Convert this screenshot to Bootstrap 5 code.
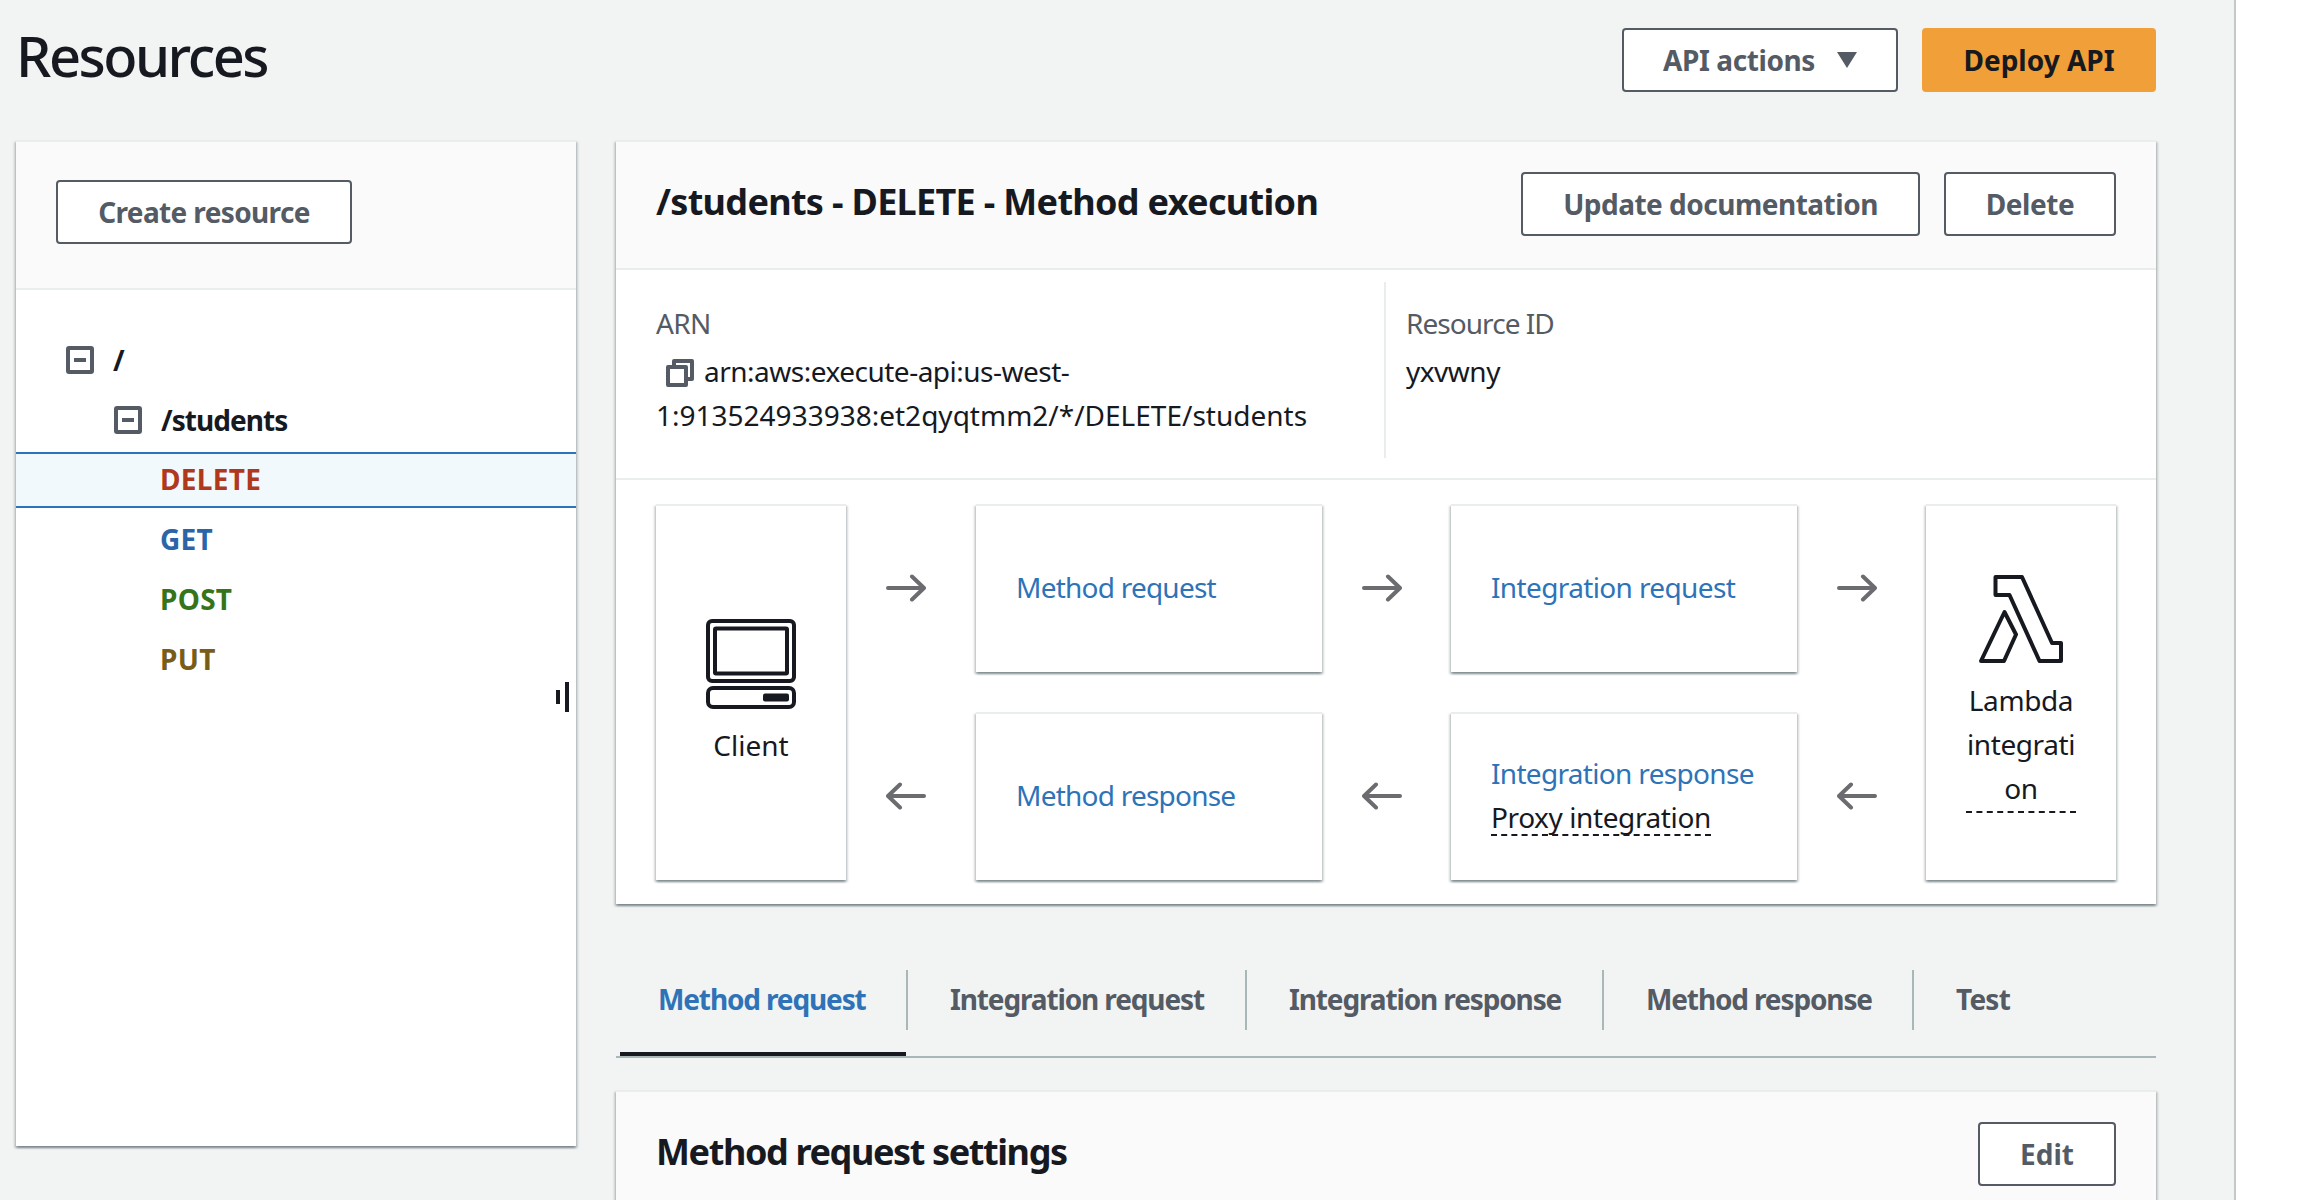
<!DOCTYPE html>
<html lang="en">
<head>
<meta charset="utf-8">
<title>Resources</title>
<link href="https://cdn.jsdelivr.net/npm/bootstrap@5.3.0/dist/css/bootstrap.min.css" rel="stylesheet">
<style>
:root{--ink:#16191f;--slate:#545b64;--blue:#2e73b8;--line:#eaeded}
html,body{height:1200px;overflow:hidden}
body{font-family:"Noto Sans","Open Sans",sans-serif;font-size:28px;font-weight:400;line-height:44px;color:var(--ink);background:#fff}
svg{display:block;flex:none}
.page{width:2236px;height:1200px;overflow:hidden;background:#f2f3f3;border-right:2px solid #c3c8c9;padding:28px 78px 0 16px}
.page-head{height:64px;margin-bottom:48px}
.page-title{font-size:56px;line-height:60px;font-weight:500;letter-spacing:-2.5px;margin:-3px 0 0}
.actions{gap:24px}
.console-btn{height:64px;border:2px solid var(--slate);border-radius:4px;background:#fff;color:var(--slate);font-size:28px;font-weight:700;line-height:58px;padding:0;white-space:nowrap}
.console-btn.deploy{background:#f19f38;border-color:#f19f38;color:var(--ink)}
.btn-api{width:276px}.deploy{width:234px}.btn-update{width:399px}.btn-delete{width:172px}.btn-create{width:296px}.btn-edit{width:138px}
.caret{margin:0 0 0 22px}
.panel{background:#fff;border:0;border-top:2px solid var(--line);border-radius:0;box-shadow:0 2px 2px rgba(0,28,36,.3),2px 2px 2px rgba(0,28,36,.15),-2px 2px 2px rgba(0,28,36,.15)}
.panel-head{background:#fafafa;border-bottom:2px solid var(--line)}
.panel-title{font-size:36px;font-weight:700;line-height:60px;margin:0}
.split{gap:40px}
.tree-panel{width:560px;height:1006px;flex:none;position:relative}
.tree-head{height:148px;padding:38px 40px}
.tree{padding-top:40px;font-weight:700}
.tree-row{height:60px;padding-bottom:1px}
.node-root{padding-left:50px;gap:19px}
.node-child{padding-left:98px;gap:19px}
.node-method{height:56px;margin:2px 0;padding-left:144px;border:solid transparent;border-width:2px 0;padding-bottom:2px}
.node-method.picked{background:#f2f9fc;border-color:var(--blue)}
.m-delete{color:#b0391d}.m-get{color:#2b65a9}.m-post{color:#36741a}.m-put{color:#785d18}
.grip{position:absolute;right:7px;top:540px}
.main-col{width:1540px}
.exec-head{height:128px;padding:30px 40px}
.facts{height:210px;padding:12px 0 20px;border-bottom:2px solid var(--line)}
.fact{padding:19px 40px 0}
.fact-arn{width:768px}
.fact-id{border-left:2px solid var(--line);padding-left:20px;flex:1}
.fact-label{color:var(--slate);margin-bottom:4px}
.copy{display:inline-block;margin:0 10px;vertical-align:-5px}
.flow{padding:24px 40px}
.tile{height:376px;width:190px;flex:none;gap:15px}
.tile-client{padding:0 0 2px}
.client-name{line-height:42px}
.tile-lambda{padding:0 40px}
.hops{flex:none;width:130px;height:376px;gap:40px}
.hops-mid{width:129px}
.hop{height:168px;padding-right:10px}
.steps{width:346px;flex:none;gap:40px}
.step{height:168px;padding:0 40px 5px}
.step-pair{padding-bottom:7px}
.step a{color:var(--blue);text-decoration:none}
.dashed{border-bottom:2px dashed var(--ink)}
.dash-tight{line-height:33px;margin-top:6px}
.lambda-name{text-align:center;word-break:break-word;padding-bottom:1px;width:110px}
.tab-strip{margin-top:50px;height:104px;border-bottom:2px solid #aab7b8;padding-left:4px}
.tab-item{height:102px;font-weight:700;color:var(--slate);border-bottom:4px solid transparent;padding:23px 0 0 42px;position:relative}
.tab-item.current{color:var(--blue);border-color:var(--ink);width:286px;margin-right:2px;padding-left:38px}
.tab-item::after{content:"";position:absolute;right:0;top:16px;width:2px;height:60px;background:#aab7b8}
.tab-item.current::after{right:-2px}
.tab-item:last-child::after{display:none}
.w-a{width:339px}.w-b{width:357px}.w-c{width:310px}
.settings{margin-top:32px}
.ls-m13{letter-spacing:-1.38px}.ls-m12{letter-spacing:-1.13px}.ls-m10{letter-spacing:-.95px}.ls-m8{letter-spacing:-.77px}.ls-m7{letter-spacing:-.68px}.ls-m6{letter-spacing:-.63px}.ls-m5{letter-spacing:-.5px}.ls-m4{letter-spacing:-.4px}.ls-p4{letter-spacing:.3px}
</style>
</head>
<body>
<div class="page">
  <header class="page-head d-flex justify-content-between align-items-start">
    <h1 class="page-title">Resources</h1>
    <div class="actions d-flex">
      <button class="btn console-btn btn-api d-flex align-items-center justify-content-center ls-m4">API actions<svg class="caret" width="20" height="16" viewBox="0 0 20 16"><path d="M0 0H20L10 16Z" fill="#545b64"/></svg></button>
      <button class="btn console-btn deploy">Deploy API</button>
    </div>
  </header>
  <div class="split d-flex align-items-start">
    <aside class="card panel tree-panel">
      <div class="panel-head tree-head"><button class="btn console-btn btn-create ls-m6">Create resource</button></div>
      <div class="tree">
        <div class="tree-row node-root d-flex align-items-center"><svg width="28" height="28" viewBox="0 0 28 28" fill="none" stroke="#545b64" stroke-width="4"><rect x="2" y="2" width="24" height="24" rx="1"/><path d="M8 14H20"/></svg><span>/</span></div>
        <div class="tree-row node-child d-flex align-items-center"><svg width="28" height="28" viewBox="0 0 28 28" fill="none" stroke="#545b64" stroke-width="4"><rect x="2" y="2" width="24" height="24" rx="1"/><path d="M8 14H20"/></svg><span class="ls-m10">/students</span></div>
        <div class="node-method picked d-flex align-items-center m-delete ls-p4">DELETE</div>
        <div class="node-method mt-1 d-flex align-items-center m-get ls-p4">GET</div>
        <div class="node-method mt-1 d-flex align-items-center m-post ls-p4">POST</div>
        <div class="node-method mt-1 d-flex align-items-center m-put ls-p4">PUT</div>
      </div>
      <svg class="grip" width="13" height="30" viewBox="0 0 13 30" fill="#16191f"><path d="M0 8H4V22H0ZM9 0H13V30H9Z"/></svg>
    </aside>
    <main class="main-col">
      <section class="card panel">
        <div class="panel-head exec-head d-flex justify-content-between align-items-start">
          <h2 class="panel-title ls-m7">/students - DELETE - Method execution</h2>
          <div class="actions d-flex">
            <button class="btn console-btn btn-update ls-m5">Update documentation</button>
            <button class="btn console-btn btn-delete ls-m4">Delete</button>
          </div>
        </div>
        <div class="facts d-flex">
          <div class="fact fact-arn">
            <div class="fact-label ls-m7">ARN</div>
            <div><svg class="copy" width="28" height="28" viewBox="0 0 28 28" fill="none" stroke="#545b64" stroke-width="4" stroke-linejoin="round"><path d="M8 8V2H26V20H21"/><rect x="2" y="8" width="18" height="18"/></svg><span class="ls-m5">arn:aws:execute-api:us-west-</span><br>1:913524933938:et2qyqtmm2/*/DELETE/students</div>
          </div>
          <div class="fact fact-id">
            <div class="fact-label ls-m10">Resource ID</div>
            <div class="ls-m5">yxvwny</div>
          </div>
        </div>
        <div class="flow d-flex">
          <div class="card panel tile tile-client d-flex flex-column align-items-center justify-content-center">
            <svg width="90" height="90" viewBox="0 0 90 90" fill="none" stroke="#16191f" stroke-width="4"><rect x="2" y="2" width="86" height="60" rx="4"/><rect x="9" y="9.500" width="72" height="45" rx="1"/><rect x="2" y="69" width="86" height="19" rx="5"/><rect x="57" y="74.500" width="26" height="8" rx="2" fill="#16191f" stroke="none"/></svg>
            <div class="client-name">Client</div>
          </div>
          <div class="hops d-flex flex-column">
            <div class="hop d-flex align-items-center justify-content-center"><svg width="40" height="28" viewBox="0 0 40 28" fill="none" stroke="#6b6c6f" stroke-width="4" stroke-linecap="round" stroke-linejoin="round"><path d="M2 14H37M26 2.500L38 14L26 25.500"/></svg></div>
            <div class="hop d-flex align-items-center justify-content-center"><svg width="40" height="28" viewBox="0 0 40 28" fill="none" stroke="#6b6c6f" stroke-width="4" stroke-linecap="round" stroke-linejoin="round"><path d="M38 14H3M14 2.500L2 14L14 25.500"/></svg></div>
          </div>
          <div class="steps d-flex flex-column">
            <div class="card panel step justify-content-center"><a class="ls-m8">Method request</a></div>
            <div class="card panel step justify-content-center"><a class="ls-m8">Method response</a></div>
          </div>
          <div class="hops hops-mid d-flex flex-column">
            <div class="hop d-flex align-items-center justify-content-center"><svg width="40" height="28" viewBox="0 0 40 28" fill="none" stroke="#6b6c6f" stroke-width="4" stroke-linecap="round" stroke-linejoin="round"><path d="M2 14H37M26 2.500L38 14L26 25.500"/></svg></div>
            <div class="hop d-flex align-items-center justify-content-center"><svg width="40" height="28" viewBox="0 0 40 28" fill="none" stroke="#6b6c6f" stroke-width="4" stroke-linecap="round" stroke-linejoin="round"><path d="M38 14H3M14 2.500L2 14L14 25.500"/></svg></div>
          </div>
          <div class="steps d-flex flex-column">
            <div class="card panel step justify-content-center"><a class="ls-m6">Integration request</a></div>
            <div class="card panel step step-pair justify-content-center"><a class="ls-m7">Integration response</a><div class="d-flex"><span class="dashed dash-tight ls-m4">Proxy integration</span></div></div>
          </div>
          <div class="hops hops-mid d-flex flex-column">
            <div class="hop d-flex align-items-center justify-content-center"><svg width="40" height="28" viewBox="0 0 40 28" fill="none" stroke="#6b6c6f" stroke-width="4" stroke-linecap="round" stroke-linejoin="round"><path d="M2 14H37M26 2.500L38 14L26 25.500"/></svg></div>
            <div class="hop d-flex align-items-center justify-content-center"><svg width="40" height="28" viewBox="0 0 40 28" fill="none" stroke="#6b6c6f" stroke-width="4" stroke-linecap="round" stroke-linejoin="round"><path d="M38 14H3M14 2.500L2 14L14 25.500"/></svg></div>
          </div>
          <div class="card panel tile tile-lambda d-flex flex-column align-items-center justify-content-center">
            <svg width="86" height="89" viewBox="0 0 86 89" fill="none" stroke="#16191f" stroke-width="4" stroke-linejoin="round"><path d="M17.500 3H44L74 69H83V87H61.500L31.500 21H17.500ZM26.500 38L38 60.500L26 87H3Z"/></svg>
            <div class="lambda-name dashed ls-m4">Lambda integration</div>
          </div>
        </div>
      </section>
      <nav class="tab-strip d-flex">
        <div class="tab-item current ls-m12">Method request</div>
        <div class="tab-item w-a ls-m12">Integration request</div>
        <div class="tab-item w-b ls-m12">Integration response</div>
        <div class="tab-item w-c ls-m12">Method response</div>
        <div class="tab-item ls-m8">Test</div>
      </nav>
      <section class="card panel settings">
        <div class="panel-head exec-head d-flex justify-content-between align-items-start">
          <h2 class="panel-title ls-m13">Method request settings</h2>
          <button class="btn console-btn btn-edit">Edit</button>
        </div>
      </section>
    </main>
  </div>
</div>
<script src="https://cdn.jsdelivr.net/npm/bootstrap@5.3.0/dist/js/bootstrap.bundle.min.js"></script>
</body>
</html>
